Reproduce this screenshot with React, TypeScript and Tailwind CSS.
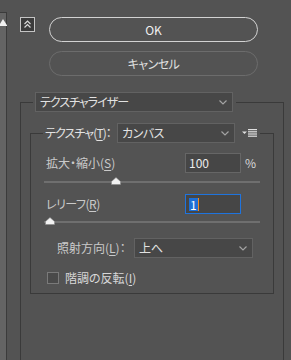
import React from "react"

const jp = "font-['Noto_Sans_CJK_JP','Noto_Sans',sans-serif] [font-feature-settings:'palt']"

function Chevron() {
    return (
        <svg width="8" height="5" viewBox="0 0 8 5" className="shrink-0">
            <polyline points="0.5,0.5 4,4 7.5,0.5" fill="none" stroke="#a3a3a3" strokeWidth="1.2" />
        </svg>
    )
}

function Select({ label, className }: { label: string, className: string }) {
    return (
        <div className={`flex h-[20px] items-center justify-between border border-[#626262] bg-[#474747] pl-[4px] pr-[5px] text-[12px] text-[#e2e2e2] ${className}`}>
            <span className="whitespace-nowrap leading-none">{label}</span>
            <Chevron />
        </div>
    )
}

function Mn({ k }: { k: string }) {
    return <span>(<span className="underline underline-offset-2">{k}</span>)</span>
}

function Thumb({ className }: { className: string }) {
    return (
        <svg width="10" height="8" viewBox="0 0 10 8" className={`absolute top-0 ${className}`}>
            <polygon points="5,0.5 9.5,4.5 9.5,7.5 0.5,7.5 0.5,4.5" fill="#f2f2f2" stroke="#8a8a8a" strokeWidth="0.6" />
        </svg>
    )
}

function Slider({ thumb }: { thumb: string }) {
    return (
        <div className="relative ml-[13px] h-[10px] w-[216px]">
            <div className="absolute left-0 right-0 top-[4px] h-[2px] bg-[#6f6f6f]" />
            <Thumb className={thumb} />
        </div>
    )
}

export default function App() {
    return (
        <div className={`flex h-[360px] w-[291px] overflow-hidden bg-[#535353] ${jp}`}>
            {/* scrollbar strip */}
            <div className="mt-[12px] flex w-[7px] shrink-0 flex-col border-r border-t border-[#3b3b3b] bg-[#646464]">
                <svg width="7" height="14" viewBox="0 0 7 14" className="mt-[6px]">
                    <polygon points="3,0 7.5,7 -1.5,7" fill="#f0f0f0" />
                </svg>
            </div>

            <div className="flex flex-1 flex-col">
                {/* buttons */}
                <div className="ml-[13px] mt-[17px] flex">
                    <div className="flex h-[15px] w-[15px] items-center justify-center border border-[#c4c4c4] bg-[#3b3b3b]">
                        <svg width="9" height="9" viewBox="0 0 9 9">
                            <polyline points="1.5,4 4.5,1 7.5,4" fill="none" stroke="#d8d8d8" strokeWidth="1.2" />
                            <polyline points="1.5,7.5 4.5,4.5 7.5,7.5" fill="none" stroke="#d8d8d8" strokeWidth="1.2" />
                        </svg>
                    </div>
                    <div className="ml-[14px] flex flex-col gap-[9px]">
                        <button className="flex h-[25px] w-[209px] items-center justify-center rounded-full border border-[#d2d2d2] text-[12px] text-[#f0f0f0]">
                            OK
                        </button>
                        <button className="flex h-[25px] w-[209px] items-center justify-center rounded-full border border-[#6c6c6c] text-[12px] tracking-[-0.5px] text-[#e0e0e0]">
                            キャンセル
                        </button>
                    </div>
                </div>

                {/* outer group */}
                <div className="ml-[13px] mt-[16px] flex w-[264px] flex-1 flex-col">
                    <div className="flex h-[20px]">
                        <div className="mt-[10px] w-[13px] border-l border-t border-[#3a3a3a]" />
                        <Select label="テクスチャライザー" className="ml-[2px] w-[198px] tracking-[-1px]" />
                        <div className="ml-[3px] mt-[10px] flex-1 border-r border-t border-[#3a3a3a]" />
                    </div>

                    <div className="flex flex-1 flex-col border-l border-r border-[#3a3a3a] px-[9px] pt-[11px]">
                        {/* inner group */}
                        <div className="flex h-[20px] items-stretch">
                            <div className="mt-[10px] w-[13px] border-l border-t border-[#3a3a3a]" />
                            <div className="ml-[2px] flex w-[72px] items-center whitespace-nowrap text-[12px] tracking-[-0.9px] text-[#e2e2e2]">
                                テクスチャ<Mn k="T" />：
                            </div>
                            <Select label="カンバス" className="w-[118px] tracking-[-0.5px]" />
                            <div className="ml-[7px] flex items-center">
                                <svg width="15" height="8" viewBox="0 0 15 8">
                                    <polygon points="0,2.5 5,2.5 2.5,5" fill="#e0e0e0" />
                                    <rect x="6" y="0" width="9" height="1.2" fill="#e0e0e0" />
                                    <rect x="6" y="2.2" width="9" height="1.2" fill="#e0e0e0" />
                                    <rect x="6" y="4.4" width="9" height="1.2" fill="#e0e0e0" />
                                    <rect x="6" y="6.6" width="9" height="1.2" fill="#e0e0e0" />
                                </svg>
                            </div>
                            <div className="ml-[3px] mt-[10px] flex-1 border-r border-t border-[#3a3a3a]" />
                        </div>

                        <div className="flex flex-col border-b border-l border-r border-[#3a3a3a] pb-[9px] pt-[10px] text-[12px]">
                            <div className="flex h-[20px] items-center pl-[15px] pr-[14px]">
                                <span className="flex-1 text-[#cacaca]">拡大・縮小<Mn k="S" /></span>
                                <div className="flex h-[20px] w-[56px] items-center border border-[#666666] bg-[#464646] pl-[3px] text-[#ececec]">100</div>
                                <span className="w-[18px] pl-[4px] text-[#d8d8d8]">%</span>
                            </div>
                            <div className="mt-[4px]">
                                <Slider thumb="left-[67px]" />
                            </div>

                            <div className="mt-[7px] flex h-[20px] items-center pl-[15px] pr-[14px]">
                                <span className="flex-1 tracking-[-0.5px] text-[#cacaca]">レリーフ<Mn k="R" /></span>
                                <div className="flex h-[20px] w-[56px] items-center border border-[#1f74de] bg-[#464646] pl-[3px]">
                                    <span className="bg-[#1d6fd6] px-[1px] leading-[13px] text-white">1</span>
                                    <span className="h-[13px] w-px bg-[#f08a24]" />
                                </div>
                                <span className="w-[18px]" />
                            </div>
                            <div className="mt-[3px]">
                                <Slider thumb="left-[1px]" />
                            </div>

                            <div className="mt-[11px] flex h-[20px] items-center pl-[26px] pr-[20px]">
                                <span className="flex-1 whitespace-nowrap text-[#cacaca]">照射方向<Mn k="L" />：</span>
                                <Select label="上へ" className="w-[119px]" />
                            </div>

                            <div className="mt-[13px] flex h-[13px] items-center pl-[16px]">
                                <div className="h-[12px] w-[12px] border border-[#7a7a7a] bg-[#4a4a4a]" />
                                <span className="ml-[6px] text-[#d8d8d8]">階調の反転<Mn k="I" /></span>
                            </div>
                        </div>
                    </div>
                </div>
            </div>
        </div>
    )
}
